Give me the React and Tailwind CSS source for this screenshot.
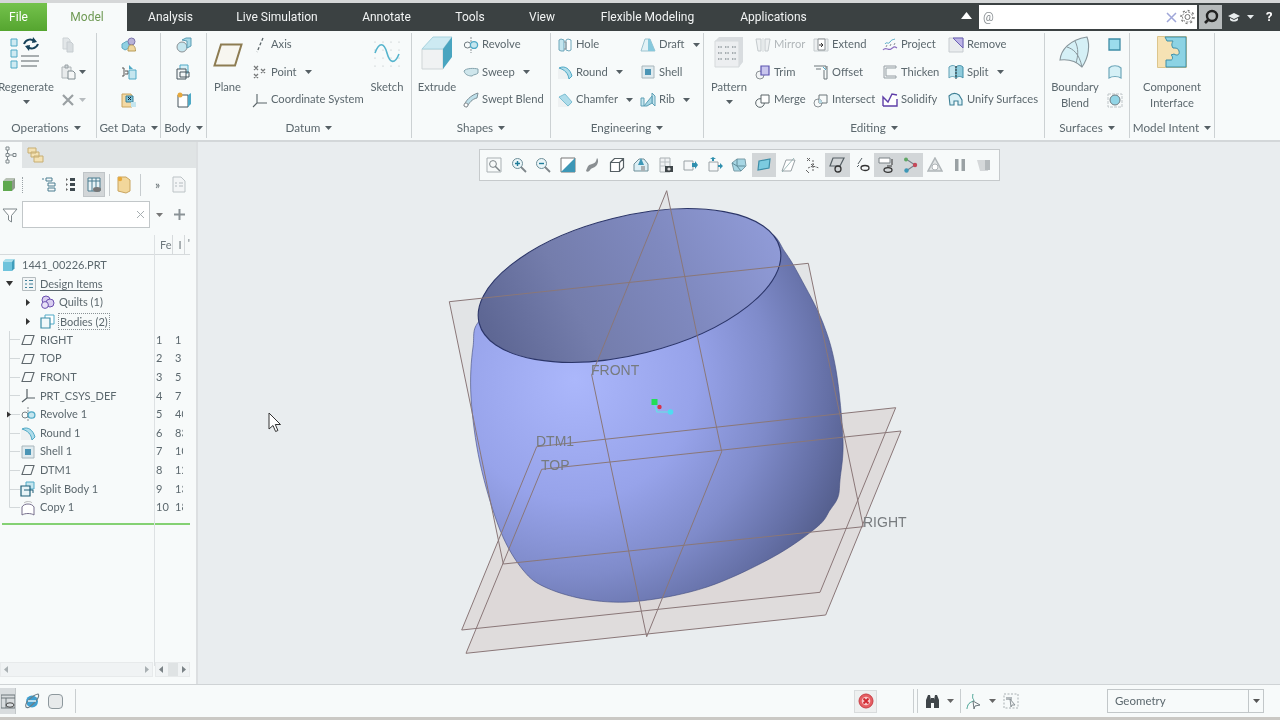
import React from "react";

const T = "#4fa9c6", L = "#c5e6ef", G = "#8b9195", D = "#47555c", Y = "#f3d9a4";
const S = ({ w = 16, h = 16, children }) => (
  <svg width={w} height={h} viewBox={`0 0 ${w} ${h}`} fill="none" className="block shrink-0">{children}</svg>
);
const Caret = ({ c = "#555f64", cls = "" }) => (
  <svg width="7" height="4" viewBox="0 0 7 4" className={`block shrink-0 ${cls}`}><path d="M0 0h7L3.5 4z" fill={c} /></svg>
);

const I = {
  copy: <S><path d="M3 1h5l2 2v9H3z" fill="#e2e6e8" stroke="#ccd2d5" /><path d="M7 5h4l2 2v8H7z" fill="#d8dde0" stroke="#c6ccd0" /></S>,
  paste: <S><path d="M2 3h9v11H2z" fill="#e8ebec" stroke="#aeb5b8" /><path d="M5 1h3v3H5z" fill="#cfd5d8" stroke="#9aa2a6" /><path d="M8 7h5l2 2v6H8z" fill="#f5f7f7" stroke="#7f8a8f" /></S>,
  del: <S><path d="M3 3l10 10M13 3L3 13" stroke="#9aa0a3" strokeWidth="2.2" /></S>,
  gd1: <S><path d="M1 7l5-3 2 1v6l-4 2-3-2z" fill="#8fd0e2" stroke="#5fa9c0" /><circle cx="10.5" cy="4.5" r="3.5" fill="#b8b3d8" stroke="#7d76ad" /><path d="M7 14c0-4 1-6 3.5-6s4 2 4 6z" fill="#efd79f" stroke="#b79a56" /></S>,
  gd2: <S><path d="M1 4h2v8H1M4 7h3v3H4" stroke="#555" /><path d="M8 1l4 4H8z" fill={T} /><path d="M8 6h7v9H8z" fill={L} stroke={T} /></S>,
  gd3: <S><path d="M1 2h9l1 2v11H1z" fill={Y} stroke="#c9a45f" /><path d="M5 4h7v6H5z" fill="#7ec5da" stroke="#3d7f95" /><path d="M7 5l3 3M10 5L7 8" stroke="#123" /><path d="M10 10h5v5h-5z" fill={L} /></S>,
  b1: <S><circle cx="6" cy="10" r="5" fill={L} stroke={G} /><path d="M6 3l4-2h5v8l-4 2V4z" fill="#a7d8e6" stroke="#5a9db4" /></S>,
  b2: <S><path d="M4 1h8v8H4z" fill="#d7eff6" stroke={T} /><path d="M1 5h9v10H1z" fill="#f2f5f6" stroke={D} /><path d="M4 8h9v5H4z" fill="none" stroke={D} /></S>,
  b3: <S><path d="M2 3h10v12H2z" fill="#fff" stroke={D} /><path d="M12 3l3-2v11l-3 3z" fill={T} /><circle cx="4" cy="3" r="2.5" fill="#e7a93c" /></S>,
  axis: <S><path d="M11 1L5 15" stroke="#5a6468" strokeWidth="1.3" strokeDasharray="3 2" /></S>,
  point: <S><path d="M2 2l4 4M6 2L2 6M9 5l4 4M13 5L9 9M2 10l4 4M6 10l-4 4" stroke="#77797a" strokeWidth="1.3" /></S>,
  csys: <S><path d="M5 2v9L1 15M5 11h10" stroke="#5a6468" strokeWidth="1.1" /></S>,
  revolve: <S><path d="M8 0v16" stroke={G} strokeDasharray="2 1" /><ellipse cx="4.5" cy="8" rx="3.2" ry="3" stroke="#6f7a80" /><ellipse cx="11" cy="8" rx="3.6" ry="3.4" fill={L} stroke={T} strokeWidth="1.3" /></S>,
  sweep: <S><path d="M1 7c2-3 10-3 14-2v4c-2 2-4 1-6 3-3 0-7-1-8-5z" fill="#cfe6ec" stroke="#84a3ad" /></S>,
  swept: <S><path d="M1 14C2 9 8 3 15 1l-1 5C9 7 6 11 4 15z" fill="#bfe0ea" stroke="#7d8f97" /><circle cx="3" cy="13" r="2" fill="#fff" stroke={G} /></S>,
  hole: <S><path d="M2 3l2-1 3 1v11H4L2 13z" fill={L} stroke="#6fa7ba" /><path d="M9 3l2-1 3 1v10l-2 1-3-1z" fill="#fff" stroke="#6fa7ba" /><path d="M7 5h2v7H7" stroke={G} /></S>,
  round: <S><path d="M1 4h6c4 0 8 3 8 8l-4 3H1z" fill="#eef1f2" /><path d="M2 4c6-3 11 1 13 8l-3 3C11 9 8 6 2 4z" fill="#aedcea" stroke={T} /></S>,
  chamfer: <S><path d="M1 5h7l7 7-4 3H1z" fill="#eef1f2" /><path d="M2 5l6-3 7 8-4 4z" fill="#aedcea" stroke="#7dbfd3" /></S>,
  draft: <S><path d="M5 2h5l5 12H1z" fill="#e3f2f6" stroke="#9cc3cf" /><path d="M8 2h2l5 12H8z" fill="#86c8dc" /></S>,
  shell: <S><path d="M2 2h12v12H2z" fill="#dfeaee" stroke="#a8b6bc" /><path d="M5 5h6v6H5z" fill="#4b95b5" /></S>,
  rib: <S><path d="M1 6h3v8H1zM12 1v10l3 3V4z" fill={L} stroke="#5e9fb5" /><path d="M4 14L12 4v7l-5 3z" fill="#a5d6e4" stroke="#5e9fb5" /></S>,
  mirror: <S><path d="M1 2h5v12H3zM15 2h-5v12h3z" fill="#eef1f2" stroke="#c4cacd" /><path d="M8 1v14" stroke="#d4d9db" /></S>,
  trim: <S><circle cx="5" cy="11" r="4" fill="#f2f4f5" stroke={G} /><path d="M6 2h8v9H6z" fill="#c9c6ee" stroke="#5c54b0" strokeWidth="1.2" /></S>,
  merge: <S><circle cx="5" cy="11" r="4.3" stroke="#5a6468" /><path d="M6 3h8v8H6z" fill="#fff" stroke="#5a6468" /></S>,
  extend: <S><path d="M1 2h14v12H1z" fill="#eceff0" stroke="#c6cccf" /><path d="M5 2h7v11H5z" fill="#fff" stroke={G} /><path d="M6 8h4M8 6l2 2-2 2" stroke="#333" /></S>,
  offset: <S><path d="M1 2h12v3M3 5h5M11 6v9h3V2" stroke="#6c767b" /><path d="M10 3l3 3" stroke={T} /></S>,
  intersect: <S><circle cx="5" cy="11" r="4" stroke={G} /><path d="M6 3h8v8H6z" stroke="#6c767b" /><path d="M6 7a4 4 0 013 4H6z" fill="#b7dbe6" /></S>,
  project: <S><path d="M1 13c3-4 5 1 8-1s3-3 6-1" stroke="#8a6dc0" strokeWidth="1.2" /><path d="M3 7c2-3 3 1 5-2s3-2 5-3" stroke={T} /><path d="M4 10l1-2M8 9l1-2M12 8l1-2" stroke={G} /></S>,
  thicken: <S><path d="M2 2h12v2H4v8h10v2H2z" fill="#eef1f2" stroke="#98a1a6" /></S>,
  solidify: <S><path d="M1 14V5l5 5 4-8 5 1v11z" fill="#fff" /><path d="M1 14V5l5 5 4-8 5 1M1 14h14V7" stroke="#5f3fa8" strokeWidth="1.4" /></S>,
  remove: <S><path d="M1 1h14v14H1z" fill="#e9ecee" stroke="#c7ccd0" /><path d="M5 1h10v10z" fill="#bdb5e6" stroke="#6a60b5" /></S>,
  split: <S><path d="M1 3c3-2 5-2 7 0v11c-2-2-5-2-7 0z" fill={L} stroke="#5e9fb5" /><path d="M8 3c2-2 5-2 7 0v11c-2-2-5-2-7 0z" fill="#8fcbdc" stroke="#3f8da6" /><path d="M8 2v13" stroke="#333" strokeDasharray="2 1" /></S>,
  unify: <S><path d="M1 4c3-3 7-3 10-1l3 5v5h-4V9H6v4H2z" fill="#d9f0f6" stroke="#3d7f95" strokeWidth="1.1" /></S>,
  s1: <S><path d="M2 2h11v11H2z" fill="#9bdcec" stroke="#3f8da6" strokeWidth="1.3" /></S>,
  s2: <S><path d="M2 14V4c3-3 9-3 12 0v10c-3-2-9-2-12 0z" fill="#d5f0f6" stroke="#6fa7ba" strokeWidth="1.2" /></S>,
  s3: <S><path d="M1 2h14v13H1z" stroke="#bfc5c8" strokeDasharray="3 1" /><circle cx="8" cy="8" r="5" fill="#92d5e6" stroke="#6f7a80" /></S>,
};

const Regen = () => (
  <svg width="32" height="36" viewBox="0 0 32 36" fill="none" className="block">
    {[2, 13, 24].map((y) => <path key={y} d={`M1 ${y + 1}h6v7H1z`} fill="#cfeaf2" stroke={T} />)}
    <path d="M14 8c2-5 8-6 11-2M28 8c-2 5-8 6-11 2" stroke="#17425a" strokeWidth="2" />
    <path d="M23 1l4 5-5 1zM19 15l-4-5 5-1z" fill="#17425a" />
    <path d="M11 20h18M11 25h18M11 30h16" stroke="#8f9598" strokeWidth="1.6" />
  </svg>
);
const PlaneBig = () => (
  <svg width="30" height="24" viewBox="0 0 30 24" fill="none" className="block"><path d="M8 1.5h20.5L22 22.5H1.5z" fill="#f7f6f0" stroke="#8d7c52" strokeWidth="2" /></svg>
);
const SketchBig = () => (
  <svg width="28" height="30" viewBox="0 0 28 30" fill="none" className="block">
    {[2, 10, 18, 26].flatMap((x) => [3, 11, 19, 27].map((y) => <circle key={x + "-" + y} cx={x} cy={y} r=".6" fill="#b2b8bb" />))}
    <path d="M2 14C6 3 11 3 14 14s8 11 12 1" stroke="#55b4cd" strokeWidth="1.6" />
  </svg>
);
const ExtrudeBig = () => (
  <svg width="32" height="34" viewBox="0 0 32 34" fill="none" className="block">
    <path d="M1 13h21v20H1z" fill="#f0f2f3" stroke="#cfd5d7" />
    <path d="M1 13L12 1h19L22 13z" fill="#cdeaf2" stroke="#a9d3de" />
    <path d="M22 13l9-12v20l-9 12z" fill="#49a5c0" />
  </svg>
);
const PatternBig = () => (
  <svg width="30" height="32" viewBox="0 0 30 32" fill="none" className="block">
    <path d="M1 5h24v26H1z" fill="#eceef0" stroke="#d5d9db" />
    <path d="M1 5l4-4h24l-4 4zM25 5l4-4v25l-4 5z" fill="#d8dcdf" />
    {[6, 13, 20].flatMap((x) => [11, 17, 23].map((y) => <path key={x + "," + y} d={`M${x - 2} ${y}h4`} stroke="#8e979b" strokeWidth="1.6" strokeDasharray="1 .6" />))}
  </svg>
);
const BlendBig = () => (
  <svg width="32" height="32" viewBox="0 0 32 32" fill="none" className="block">
    <path d="M1 24C2 14 10 4 28 1c3 8 2 20-5 30-6-6-14-8-22-7z" fill="#d5f0f6" stroke="#87959b" strokeWidth="1.1" />
    <path d="M8 11c6 2 12 6 15 20M16 5c4 8 3 15 1 22" stroke="#87959b" />
  </svg>
);
const Component = () => (
  <svg width="30" height="32" viewBox="0 0 30 32" fill="none" className="block">
    <path d="M.5.5h29v31H.5z" fill="#f6e2b4" stroke="#dcc58c" />
    <path d="M8 1h21v30H9v-7h5c2 0 2-4 0-5l3-1c3 2 6 1 5-3-1-3-3-3-6-3-2-3-1-5 0-7H10z" fill="#8cd3e4" stroke="#3d8ea8" />
  </svg>
);

const Small = ({ icon, label, caret, off, cls = "" }) => (
  <div className={`flex h-[27.5px] items-center gap-[3px] whitespace-nowrap ${cls}`}>
    {I[icon]}
    <span className={off ? "text-[#b1b7ba]" : ""}>{label}</span>
    {caret && <Caret cls="ml-[5px]" />}
  </div>
);
const Large = ({ icon, lines, caret, w }) => (
  <div className={`flex flex-col items-center pt-[5px] shrink-0 ${w}`}>
    <div className="flex h-[43px] items-start justify-center">{icon}</div>
    {lines.map((l) => <span key={l} className="h-4 leading-4 whitespace-nowrap">{l}</span>)}
    {caret && <Caret cls="mt-[5px]" />}
  </div>
);
const Group = ({ label, w, labelCls = "", children }) => (
  <div className={`flex flex-col shrink-0 ${w}`}>
    <div className="flex h-[83px] shrink-0">{children}</div>
    <div className={`flex h-[25px] shrink-0 pt-[2px] items-center justify-center gap-[5px] text-[11.7px] ${labelCls}`}>
      <span>{label}</span><Caret />
    </div>
  </div>
);
const Sep = () => <div className="w-px my-[2px] bg-[#ccd1d3] shrink-0" />;

const Ribbon = () => (
  <div className="flex h-[111px] shrink-0 bg-[#f7fafa] text-[11.2px] font-['Lato',sans-serif] text-[#5c686e] overflow-hidden border-b-2 border-[#d3d7d9]">
    <Group label="Operations" w="w-[96px]" labelCls="pr-[4px]">
      <Large w="w-[52px]" icon={<Regen />} lines={["Regenerate"]} caret />
      <div className="flex flex-col pl-[8px]">
        <div className="flex h-[27.5px] items-center">{I.copy}</div>
        <div className="flex h-[27.5px] items-center gap-[3px]">{I.paste}<Caret /></div>
        <div className="flex h-[27.5px] items-center gap-[3px]">{I.del}<Caret c="#b7bcbf" /></div>
      </div>
    </Group>
    <Sep />
    <Group label="Get Data" w="w-[63px]">
      <div className="flex flex-col w-full items-center">
        {["gd1", "gd2", "gd3"].map((k) => <div key={k} className="flex h-[27.5px] items-center">{I[k]}</div>)}
      </div>
    </Group>
    <Sep />
    <Group label="Body" w="w-[45px]">
      <div className="flex flex-col w-full items-center">
        {["b1", "b2", "b3"].map((k) => <div key={k} className="flex h-[27.5px] items-center">{I[k]}</div>)}
      </div>
    </Group>
    <Sep />
    <Group label="Datum" w="w-[204px]">
      <Large w="w-[41px]" icon={<div className="pt-[7px]"><PlaneBig /></div>} lines={["Plane"]} />
      <div className="flex flex-col pl-[4px] w-[118px]">
        <Small icon="axis" label="Axis" />
        <Small icon="point" label="Point" caret />
        <Small icon="csys" label="Coordinate System" />
      </div>
      <Large w="w-[42px]" icon={<div className="pt-[3px]"><SketchBig /></div>} lines={["Sketch"]} />
    </Group>
    <Sep />
    <Group label="Shapes" w="w-[138px]">
      <Large w="w-[50px]" icon={<ExtrudeBig />} lines={["Extrude"]} />
      <div className="flex flex-col pl-[1px]">
        <Small icon="revolve" label="Revolve" />
        <Small icon="sweep" label="Sweep" caret />
        <Small icon="swept" label="Swept Blend" />
      </div>
    </Group>
    <Sep />
    <Group label="Engineering" w="w-[152px]">
      <div className="flex flex-col pl-[6px] w-[89px]">
        <Small icon="hole" label="Hole" />
        <Small icon="round" label="Round" caret />
        <Small icon="chamfer" label="Chamfer" caret />
      </div>
      <div className="flex flex-col">
        <Small icon="draft" label="Draft" caret />
        <Small icon="shell" label="Shell" />
        <Small icon="rib" label="Rib" caret />
      </div>
    </Group>
    <Sep />
    <Group label="Editing" w="w-[340px]">
      <Large w="w-[50px]" icon={<PatternBig />} lines={["Pattern"]} caret />
      <div className="flex flex-col pl-[1px] w-[59px]">
        <Small icon="mirror" label="Mirror" off />
        <Small icon="trim" label="Trim" />
        <Small icon="merge" label="Merge" />
      </div>
      <div className="flex flex-col w-[69px]">
        <Small icon="extend" label="Extend" />
        <Small icon="offset" label="Offset" />
        <Small icon="intersect" label="Intersect" />
      </div>
      <div className="flex flex-col w-[66px]">
        <Small icon="project" label="Project" />
        <Small icon="thicken" label="Thicken" />
        <Small icon="solidify" label="Solidify" />
      </div>
      <div className="flex flex-col">
        <Small icon="remove" label="Remove" />
        <Small icon="split" label="Split" caret />
        <Small icon="unify" label="Unify Surfaces" />
      </div>
    </Group>
    <Sep />
    <Group label="Surfaces" w="w-[84px]">
      <Large w="w-[60px]" icon={<BlendBig />} lines={["Boundary", "Blend"]} />
      <div className="flex flex-col items-center w-[20px]">
        {["s1", "s2", "s3"].map((k) => <div key={k} className="flex h-[27.5px] items-center">{I[k]}</div>)}
      </div>
    </Group>
    <Sep />
    <Group label="Model Intent" w="w-[84px]">
      <Large w="w-full" icon={<Component />} lines={["Component", "Interface"]} />
    </Group>
    <Sep />
  </div>
);

const tabs = [["Analysis", "w-[87px]"], ["Live Simulation", "w-[126px]"], ["Annotate", "w-[93px]"], ["Tools", "w-[74px]"], ["View", "w-[70px]"], ["Flexible Modeling", "w-[141px]"], ["Applications", "w-[111px]"]];

const TabBar = () => (
  <div className="flex h-[28px] shrink-0 items-stretch bg-[#3b4142] text-xs text-[#f2f4f4]">
    <div className="flex w-[47px] items-center justify-center pr-[10px] bg-gradient-to-b from-[#74c24c] to-[#55a52f] text-white">File</div>
    <div className="flex w-[80px] items-center justify-center bg-[#f7fafa] text-[#6f9a55]">Model</div>
    {tabs.map(([t, w]) => <div key={t} className={`flex items-center justify-center ${w}`}>{t}</div>)}
    <div className="flex-1 flex items-center justify-end pr-[7px] pb-[3px]">
      <svg width="11" height="7" viewBox="0 0 11 7"><path d="M0 7L5.5 0 11 7z" fill="#fff" /></svg>
    </div>
    <div className="flex w-[218px] h-[24px] self-center mr-[2px] items-center bg-white pl-[4px] pr-[2px] text-[#8a9094]">
      <span className="flex-1">@</span>
      <svg width="11" height="11" viewBox="0 0 11 11" className="mr-[3px]"><path d="M1 1l9 9M10 1l-9 9" stroke="#9fa6d8" strokeWidth="1.5" /></svg>
      <svg width="15" height="16" viewBox="0 0 15 16" fill="none"><circle cx="7.5" cy="8" r="2.5" stroke="#777" /><circle cx="7.5" cy="8" r="5" stroke="#777" strokeWidth="1" strokeDasharray="2 1.4" /><circle cx="7.5" cy="8" r="6.5" stroke="#777" strokeWidth="1.4" strokeDasharray="2 3" /></svg>
    </div>
    <div className="flex w-[23px] h-[24px] self-center items-center justify-center bg-[#b6babb]">
      <svg width="16" height="16" viewBox="0 0 16 16" fill="none"><circle cx="9" cy="7" r="5" stroke="#222" strokeWidth="2.4" /><path d="M5 11l-3 3" stroke="#222" strokeWidth="2.6" /></svg>
    </div>
    <div className="flex w-[58px] items-center pl-[6px]">
      <svg width="12" height="9" viewBox="0 0 12 9"><path d="M0 3l6-3 6 3-6 3z" fill="#e8eced" /><path d="M2 5v2c2 2 6 2 8 0V5L6 7z" fill="#e8eced" /></svg>
      <Caret c="#e8eced" cls="ml-[7px]" />
      <span className="ml-[12px] font-bold text-[13px] text-white">?</span>
    </div>
  </div>
);

const Tb = ({ children, on }) => (
  <div className={`flex h-[24px] w-[24.5px] items-center justify-center shrink-0 ${on ? "bg-[#d2d6d8]" : ""}`}>{children}</div>
);
const V = (c) => <S>{c}</S>;
const viewIcons = [
  V(<><path d="M1 1h14v14H1z" stroke="#a9b0b3" /><circle cx="7" cy="7" r="3.4" stroke="#7e868a" /><path d="M9 9l5 5" stroke="#7e868a" strokeWidth="1.5" /></>),
  V(<><circle cx="6.5" cy="6.5" r="5" fill="#eaf5f8" stroke="#6f8f99" /><path d="M4 6.5h5M6.5 4v5" stroke="#1e7c99" strokeWidth="1.4" /><path d="M10 10l5 5" stroke="#7e868a" strokeWidth="1.8" /></>),
  V(<><circle cx="6.5" cy="6.5" r="5" fill="#eaf5f8" stroke="#6f8f99" /><path d="M4 6.5h5" stroke="#1e7c99" strokeWidth="1.4" /><path d="M10 10l5 5" stroke="#7e868a" strokeWidth="1.8" /></>),
  V(<><path d="M1 1h14v14H1z" fill="#fff" stroke="#777" /><path d="M15 1v14H1z" fill="#3d97b6" /></>),
  V(<path d="M2 14c2-5 2-6 6-7s4-3 5-6c2 2 1 6-1 8s-5 2-6 4-3 2-4 1z" fill="#8a8f92" />),
  V(<path d="M1.5 5.5l4-4h9v9l-4 4h-9zM1.5 5.5h9v9M10.5 5.5l4-4" fill="#fff" stroke="#555f64" strokeWidth="1.2" />),
  V(<><path d="M1 7l5-5h5l4 5v7H1z" fill="#dceef4" stroke="#6f8f99" /><path d="M8 1l3 7H5z" fill="#3d97b6" /><path d="M8 9h4v5H8z" fill="#aab1b4" /></>),
  V(<><path d="M2 1h10v14H2z" fill="#f1f3f4" stroke="#a9b0b3" /><path d="M2 5h10M2 9h6M7 1v8" stroke="#b9bfc2" /><path d="M7 9h8v6H7z" fill="#3f4649" /><circle cx="11" cy="12" r="1.6" fill="#ddd" /></>),
  V(<><path d="M2 4h9v9H2z" fill="#f5f7f8" stroke="#9aa2a6" /><path d="M10 6h3V4l3 4-3 4v-2h-3z" fill="#2f8fae" /></>),
  V(<><path d="M2 5h9v9H2z" fill="#f5f7f8" stroke="#9aa2a6" /><path d="M5 4V2H3l3-2 3 2H7v2z" fill="#2f8fae" /><path d="M11 8h2V6l3 3-3 3v-2h-2z" fill="#2f8fae" /></>),
  V(<><path d="M1 6l5-4h8l1 7-5 5H3z" fill="#a6d6e4" stroke="#7b9ca7" /><path d="M6 2v7l-5-3M6 9l8 0M6 9l4 5" stroke="#5f8c9a" /></>),
  V(<path d="M3 4l11-2-1 9-11 2z" fill="#7ccbe0" stroke="#3d8ea8" strokeWidth="1.2" />),
  V(<><path d="M2 14h9l4-11H6z" fill="#fff" stroke="#9aa2a6" /><path d="M14 1L2 15" stroke="#8aa" strokeWidth=".8" /></>),
  V(<><path d="M2 1l3 3M5 1L2 4M6 7l3 3M9 7l-3 3M1 13l3 3" stroke="#666" /><path d="M8 3v12M3 11l5-2 6 2" stroke="#666" strokeDasharray="2 1" /></>),
  V(<><path d="M4 1h11l-4 8H1z" stroke="#555f64" strokeWidth="1.2" /><circle cx="9" cy="12" r="3" fill="#d0d4d6" stroke="#333" strokeWidth="1.3" /></>),
  V(<><path d="M8 1L4 7M5 8L3 10" stroke="#555f64" /><ellipse cx="11" cy="11" rx="4" ry="2.5" stroke="#333" strokeWidth="1.3" /></>),
  V(<><path d="M1 1h11v5H1z" fill="#fff" stroke="#7a8286" /><path d="M14 2v6M9 9h5" stroke="#333" /><ellipse cx="10" cy="13" rx="4" ry="2.3" stroke="#333" strokeWidth="1.3" /></>),
  V(<><path d="M3 2l9 6-9 6" stroke="#77808a" strokeWidth="1.1" /><circle cx="3" cy="2.5" r="2" fill="#5fa764" /><circle cx="12" cy="8" r="2.2" fill="#c4495a" /><circle cx="3.5" cy="13.5" r="2.2" fill="#3d97b6" /></>),
  V(<><path d="M8 1l7 13H1z" fill="#e2e5e6" stroke="#afb5b8" strokeWidth="1.5" /><circle cx="8" cy="10" r="3" fill="#fff" stroke="#afb5b8" /></>),
  V(<path d="M3 2h3.5v12H3zM9.5 2H13v12H9.5z" fill="#9aa1a4" />),
  V(<><path d="M1 3h11v11H4z" fill="#d5d8da" /><path d="M9 3h5v10H9z" fill="#b5babd" /></>),
];
const actives = new Set([11, 14, 16, 17]);

const ViewBar = () => (
  <div className="relative z-10 ml-[281px] mt-[7px] flex h-[32px] w-[521px] items-center pl-[2px] bg-[#f7fafa] border border-[#c6cacc]">
    {viewIcons.map((ic, i) => <Tb key={i} on={actives.has(i)}>{ic}</Tb>)}
  </div>
);

const smooth = (p) => {
  const n = p.length;
  let d = `M${p[0][0]} ${p[0][1]}`;
  for (let i = 0; i < n; i++) {
    const a = p[(i - 1 + n) % n], b = p[i], c = p[(i + 1) % n], e = p[(i + 2) % n];
    d += `C${b[0] + (c[0] - a[0]) / 6} ${b[1] + (c[1] - a[1]) / 6} ${c[0] - (e[0] - b[0]) / 6} ${c[1] - (e[1] - b[1]) / 6} ${c[0]} ${c[1]}`;
  }
  return d + "Z";
};
const bodyPts = [[768, 232], [785, 252], [800, 277], [823, 323], [836, 370], [843, 440], [840, 480], [838, 497], [830, 510], [817, 527], [773, 557], [707, 587], [640, 601], [590, 600], [547, 588], [523, 570], [500, 530], [480, 463], [471, 397], [473, 347], [482, 318], [540, 280], [640, 240], [720, 225]];

const Model = () => {
  const line = "#8a7778";
  return (
    <svg className="absolute left-0 top-0" width="1082" height="542" viewBox="198 142 1082 542" fill="none">
      <defs>
        <radialGradient id="bd" gradientUnits="userSpaceOnUse" cx="575" cy="380" r="300">
          <stop offset="0" stopColor="#abb7fb" />
          <stop offset=".4" stopColor="#97a3ea" />
          <stop offset=".65" stopColor="#7f8bca" />
          <stop offset=".85" stopColor="#646fa5" />
          <stop offset="1" stopColor="#4f5985" />
        </radialGradient>
        <linearGradient id="rm" gradientUnits="userSpaceOnUse" x1="490" y1="330" x2="775" y2="260">
          <stop offset="0" stopColor="#5e6794" />
          <stop offset=".3" stopColor="#747dac" />
          <stop offset=".65" stopColor="#7f89bf" />
          <stop offset="1" stopColor="#8f9ad6" />
        </linearGradient>
      </defs>
      <path d="M449.3 301.7L808.3 263.3L863.3 526.7L503.3 564Z" fill="#e2e4e6" />
      <path d="M666.7 190.7L721.7 451.7L646.7 636.7L591.7 375Z" fill="#e3e5e7" />
      <path d="M536.7 446.7L895.7 407.7L820 592.3L461.7 630Z" fill="#dfdcdc" />
      <path d="M541.7 469.3L901 431L825.7 615L466 653.3Z" fill="#dcd7d7" fillOpacity=".8" />
      <path d={smooth(bodyPts)} fill="url(#bd)" stroke="#3f4a7c" strokeWidth=".6" />
      <ellipse cx="629.5" cy="285.5" rx="155" ry="69" transform="rotate(-14 629.5 285.5)" fill="url(#rm)" stroke="#2b3568" strokeWidth="1.1" />
      <g stroke={line} strokeWidth="1">
        <path d="M449.3 301.7L808.3 263.3L863.3 526.7L503.3 564Z" />
        <path d="M666.7 190.7L721.7 451.7L646.7 636.7L591.7 375Z" />
        <path d="M536.7 446.7L895.7 407.7L820 592.3L461.7 630Z" />
        <path d="M541.7 469.3L901 431L825.7 615L466 653.3Z" />
      </g>
      <g fill="#777b7e" fontFamily="'Liberation Sans', sans-serif" fontSize="14">
        <text x="591" y="375">FRONT</text>
        <text x="536" y="446">DTM1</text>
        <text x="541" y="470">TOP</text>
        <text x="863" y="527">RIGHT</text>
      </g>
      <path d="M654 403l3 9h13" stroke="#62e3e8" strokeWidth="1.2" />
      <rect x="651.5" y="399" width="6" height="6" fill="#22dd55" />
      <circle cx="659.5" cy="407" r="2.2" fill="#d8324a" />
      <circle cx="670.5" cy="412" r="2.8" fill="#4fdcf0" />
      <path d="M269 413v16l4-3.5 2.6 6 2.3-1-2.6-6h5.2z" fill="#fff" stroke="#333" strokeWidth="1" />
    </svg>
  );
};

const Gut = ({ arrow, end }) => (
  <svg width="40" height="19" viewBox="0 0 40 19" fill="none" className="block shrink-0">
    <path d={end ? "M9.5 0V9.5H20" : "M9.5 0V19M9.5 9.5H20"} stroke="#d3d8da" />
    {arrow === "r" && <path d="M7 6.5l4 3-4 3z" fill="#333" />}
  </svg>
);
const TP = <S w={14} h={14}><path d="M4 2.5h9L10 11.5H1z" stroke="#5f686d" strokeWidth="1.1" /></S>;
const treeIc = {
  csys: <S w={15} h={15}><path d="M6 1v9L1 14M6 10h8" stroke="#555f64" strokeWidth="1.2" /></S>,
  rev: <S w={15} h={15}><path d="M7 0v15" stroke={G} strokeDasharray="2 1" /><ellipse cx="4" cy="8" rx="3" ry="3" stroke="#7a8286" /><ellipse cx="10.5" cy="8" rx="3.4" ry="3.2" fill={L} stroke={T} strokeWidth="1.3" /></S>,
  round: I.round,
  shell: I.shell,
  split: <S><path d="M6 1h8v7H6z" fill="#c5e6ef" stroke={T} /><path d="M1 5h9v10H1z" fill="#e8f4f7" stroke="#1f5f78" strokeWidth="1.2" /><path d="M4 9h9v3" stroke="#1f5f78" /></S>,
  copy: <S><path d="M2 15V7c2-4 10-4 12 0v8c-3-2-9-2-12 0z" fill="#fff" stroke="#766f8c" /><path d="M4 3c2-2 7-2 8 0" stroke="#bbb" /></S>,
};
const rows = [
  ["RIGHT", TP, "1", "1"], ["TOP", TP, "2", "3"], ["FRONT", TP, "3", "5"], ["PRT_CSYS_DEF", treeIc.csys, "4", "7"],
  ["Revolve 1", treeIc.rev, "5", "40", "r"], ["Round 1", treeIc.round, "6", "83"], ["Shell 1", treeIc.shell, "7", "10"],
  ["DTM1", TP, "8", "12"], ["Split Body 1", treeIc.split, "9", "13"], ["Copy 1", treeIc.copy, "10", "18", null, true],
];

const Row = ({ children }) => <div className="flex h-[18.65px] items-center overflow-hidden">{children}</div>;

function Arrow({ r, dark }) {
  return <svg width="4" height="7" viewBox="0 0 4 7"><path d={r ? "M0 0l4 3.500L0 7z" : "M4 0L0 3.500 4 7z"} fill={dark ? "#7a8286" : "#a9b0b3"} /></svg>;
}

const Panel = () => (
  <div className="flex w-[198px] shrink-0 flex-col bg-[#f7fafa] border-r-2 border-[#dcdfe1] text-[11px] font-['Lato',sans-serif] text-[#5c686e] overflow-hidden">
    <div className="flex h-[26px] shrink-0 bg-[#e0e4e5]">
      <div className="flex w-[22px] items-center justify-center bg-[#f7fafa]">
        <svg width="12" height="18" viewBox="0 0 12 18" fill="none" stroke="#7f888c"><path d="M1 1h3v3H1zM1 7.5h3v3H1zM1 14h3v3H1zM8 7.5h3v3H8zM2.500 4v3.500M2.500 10.500V14M4 9h4" /></svg>
      </div>
      <div className="flex w-[26px] items-center justify-center">
        <svg width="17" height="16" viewBox="0 0 17 16" fill="#f4e2b4" stroke="#c7ae72"><path d="M1 1h8v5H1zM4 5h8v5H4zM7 9h9v6H7z" /></svg>
      </div>
    </div>
    <div className="flex h-[33px] shrink-0 items-center">
      <div className="ml-[2px] w-[14px]">
        <svg width="14" height="15" viewBox="0 0 14 15"><path d="M1 4h9v10H1z" fill="#5fa84f" /><path d="M1 4l3-3h9l-3 3z" fill="#b7c1b4" /><path d="M10 4l3-3v10l-3 3z" fill="#8f9b8c" /></svg>
      </div>
      <div className="ml-[6px] h-[16px] border-l border-dotted border-[#9aa2a6]" />
      <div className="ml-[18px] w-[16px]">
        <svg width="16" height="15" viewBox="0 0 16 15" fill="none"><path d="M3 2H1M5 1h6v3H5zM7 6h7v3H7zM7 11h7v3H7z" stroke="#4b7d90" /></svg>
      </div>
      <div className="ml-[8px] w-[12px]">
        <svg width="12" height="15" viewBox="0 0 12 15"><path d="M1 1l2 1.500L1 4zM1 6l2 1.500L1 9zM1 11l2 1.500L1 14z" fill="#666" /><path d="M5 1h5v3H5zM5 6h5v3H5zM5 11h5v3H5z" fill="#3f4a50" /></svg>
      </div>
      <div className="ml-[6px] flex h-[25px] w-[22px] items-center justify-center bg-[#d2d6d8] border border-[#c0c5c8]">
        <svg width="15" height="16" viewBox="0 0 15 16" fill="none"><path d="M1 1h12v13H1zM1 4h12M5 1v13M9 1v13" stroke="#4b7d90" fill="#e8f2f5" /><ellipse cx="10" cy="12.500" rx="4" ry="2.400" fill="#777" /></svg>
      </div>
      <div className="ml-[4px] h-[22px] border-l border-[#c7cccf]" />
      <div className="ml-[7px] w-[14px]">
        <svg width="14" height="18" viewBox="0 0 14 18"><path d="M1 1h8l4 3v11l-4 2-8-2z" fill="#f2d79b" stroke="#c9a45f" /><circle cx="3" cy="3" r="2.200" fill="#e7a93c" /></svg>
      </div>
      <div className="ml-[9px] h-[22px] border-l border-[#c7cccf]" />
      <span className="ml-[14px] text-[12px] leading-none text-[#5a6468]">»</span>
      <div className="ml-[12px]">
        <svg width="14" height="17" viewBox="0 0 14 17" fill="none"><path d="M1 1h8l4 4v11H1z" fill="#f3f5f6" stroke="#bcc3c6" /><path d="M3 7h2M7 7h4M3 10h2M7 10h4" stroke="#b4bbbf" /></svg>
      </div>
    </div>
    <div className="flex h-[27px] shrink-0 items-center">
      <svg width="16" height="16" viewBox="0 0 16 16" fill="none" className="ml-[2px]"><path d="M1 2h14L9.500 8.500V15l-3-2V8.500z" fill="#fff" stroke="#7f888c" /></svg>
      <div className="ml-[4px] flex h-[27px] w-[128px] items-center justify-end border border-[#c2c7c9] bg-white pr-[4px]">
        <svg width="9" height="9" viewBox="0 0 9 9"><path d="M1 1l7 7M8 1L1 8" stroke="#a7aeb1" /></svg>
      </div>
      <Caret c="#777" cls="ml-[6px]" />
      <svg width="11" height="11" viewBox="0 0 11 11" className="ml-[11px]"><path d="M4.500 0h2v4.500H11v2H6.500V11h-2V6.500H0v-2h4.500z" fill="#8a9296" /></svg>
    </div>
    <div className="mt-[7px] relative flex-1 flex flex-col">
      <div className="absolute left-[154px] top-0 bottom-[18px] w-px bg-[#dde1e3]" />
      <div className="flex h-[20px] shrink-0 border-b border-[#d6dadc] text-[#6f797e] mr-[6px]">
        <div className="ml-[154px] w-[20px] pl-[5px] leading-[20px] border-l border-[#d6dadc]">Fe</div>
        <div className="w-[12px] pl-[5px] leading-[20px] border-l border-[#d6dadc] overflow-hidden">I</div>
        <div className="pl-[3px] leading-[16px] border-l border-[#d6dadc]">'</div>
      </div>
      <div className="pt-px">
        <Row>
          <div className="ml-[2px]"><S w={14} h={14}><path d="M1 3.500h9V13H1z" fill="#6ec3dc" /><path d="M1 3.500L3.500 1h9L10 3.500z" fill="#a8deeb" /><path d="M10 3.500L12.500 1v9.500L10 13z" fill="#3f9dbb" /></S></div>
          <span className="ml-[6px]">1441_00226.PRT</span>
        </Row>
        <Row>
          <svg width="7" height="5" viewBox="0 0 7 5" className="ml-[6px]"><path d="M0 0h7L3.500 5z" fill="#333" /></svg>
          <div className="ml-[9px]"><S w={14} h={14}><path d="M.5.500h13v13H.5z" fill="#f2f5f6" stroke="#b5bcbf" /><path d="M3 3.500h2M3 7h2M3 10.500h2M7 3.500h4M7 7h4M7 10.500h4" stroke="#3f7f98" /></S></div>
          <span className="ml-[4px] underline underline-offset-2">Design Items</span>
        </Row>
        <Row>
          <svg width="4" height="7" viewBox="0 0 4 7" className="ml-[26px]"><path d="M0 0l4 3.500L0 7z" fill="#333" /></svg>
          <div className="ml-[10px]"><S w={15} h={15}><circle cx="6" cy="5" r="4" fill="#d8cdf0" stroke="#6b4fb0" /><circle cx="10" cy="8" r="4" fill="#d8cdf0" stroke="#6b4fb0" /><circle cx="5" cy="10" r="3.400" fill="#e9e2f7" stroke="#6b4fb0" /></S></div>
          <span className="ml-[4px]">Quilts (1)</span>
        </Row>
        <Row>
          <svg width="4" height="7" viewBox="0 0 4 7" className="ml-[26px]"><path d="M0 0l4 3.500L0 7z" fill="#333" /></svg>
          <div className="ml-[10px]"><S w={15} h={15}><path d="M5 1h9v9H5z" fill="#fff" stroke={T} /><path d="M1 4h9v10H1z" fill="#f0f8fa" stroke="#3d8ea8" strokeWidth="1.200" /></S></div>
          <span className="ml-[3px] px-px border border-dotted border-[#8a9296] leading-[15px]">Bodies (2)</span>
        </Row>
        {rows.map(([n, ic, a, b, ar, end]) => (
          <Row key={n}>
            <Gut arrow={ar} end={end} />
            <div className="-ml-[20px] mr-[4px] w-[16px] flex justify-center">{ic}</div>
            <span className="w-[114px] whitespace-nowrap">{n}</span>
            <span className="w-[21px] pl-[2px]">{a}</span>
            <span className="w-[8px] overflow-hidden whitespace-nowrap text-clip">{b}</span>
          </Row>
        ))}
        <div className="ml-[2px] mr-[6px] mt-[6px] h-[2px] bg-[#84d173]" />
      </div>
      <div className="mt-auto mb-[7px] flex h-[15px] shrink-0 items-stretch gap-[2px] mr-[6px]">
        <div className="flex w-[153px] items-center justify-between bg-[#f0f3f4] px-[3px] border border-[#e7eaeb]">
          <Arrow /><Arrow r />
        </div>
        <div className="flex flex-1 items-center justify-between bg-[#f0f3f4] px-[3px] border border-[#e7eaeb]">
          <Arrow dark />
          <div className="h-full w-[10px] bg-[#dfe3e4]" />
          <Arrow r dark />
        </div>
      </div>
    </div>
  </div>
);

const StatusBar = () => (
  <div className="flex h-[33px] shrink-0 items-center bg-[#f7fafa] border-t border-[#cfd3d5] text-[11.5px] font-['Lato',sans-serif] text-[#5c686e]">
    <div className="flex h-[26px] w-[16px] items-center justify-center bg-[#d8dcde] border-r border-[#c2c7c9]">
      <svg width="14" height="15" viewBox="0 0 14 15" fill="none"><path d="M0 1h14v13H0zM0 4h14M5 4v10" stroke="#6c767b" /><ellipse cx="9" cy="11" rx="4" ry="2.200" stroke="#444" /></svg>
    </div>
    <svg width="16" height="17" viewBox="0 0 16 17" className="ml-[8px]" fill="none"><circle cx="8" cy="8.500" r="6" fill="#3f9fd0" /><path d="M2 14C0 10 9 2 14 1c2 2-1 6-4 9s-6 6-8 4z" stroke="#6e7e86" strokeWidth="1.100" /><path d="M4 8h8" stroke="#d7eef8" strokeWidth="1.600" /></svg>
    <div className="ml-[8px] h-[15px] w-[15px] rounded-sm bg-[#e7eaeb] border border-[#8d989d]" />
    <div className="ml-[12px] h-[24px] border-l border-[#c9ced0]" />
    <div className="ml-[778px] flex h-[23px] w-[23px] items-center justify-center border border-[#d9dcdd] bg-[#eef0f0]">
      <svg width="16" height="16" viewBox="0 0 16 16" fill="none"><circle cx="8" cy="8" r="7" fill="#e55d62" stroke="#c93f46" /><circle cx="8" cy="8" r="4.300" fill="#f7c7c9" /><path d="M5.500 5.500l5 5M10.500 5.500l-5 5" stroke="#d0272f" strokeWidth="1.800" /></svg>
    </div>
    <div className="ml-[36px] h-[24px] w-[5px] border-x border-[#c9ced0]" />
    <svg width="15" height="15" viewBox="0 0 15 15" className="ml-[7px]"><path d="M1 6l2-5h2l1 5v8H1zM9 6l1-5h2l2 5v8H9zM6 4h3v5H6z" fill="#3f4549" /></svg>
    <Caret c="#666" cls="ml-[7px]" />
    <div className="ml-[6px] h-[24px] border-l border-[#c9ced0]" />
    <svg width="17" height="17" viewBox="0 0 17 17" fill="none" className="ml-[4px]"><path d="M8 1c-1 4 0 5 1 6s-5 2-6 5-1 3-1 4" stroke="#3f9f8f" /><path d="M8 8l7 4-5 1-1 3z" stroke="#6c767b" fill="#f7fafa" /></svg>
    <Caret c="#666" cls="ml-[7px]" />
    <svg width="16" height="16" viewBox="0 0 16 16" fill="none" className="ml-[7px]"><path d="M1 1h14v14H1z" stroke="#a9b0b3" strokeDasharray="2 1.500" /><path d="M3 4h6v3H3z" fill="#b3b9bc" /><path d="M7 6l5 6-3 0-1 2z" fill="#eef0f1" stroke="#8a9296" /></svg>
    <div className="ml-[88px] flex h-[24px] w-[157px] items-stretch border border-[#c2c7c9] bg-[#f7fafa]">
      <span className="flex-1 pl-[7px] leading-[22px] text-[#5c686e]">Geometry</span>
      <div className="flex w-[15px] items-center justify-center border-l border-[#c2c7c9]"><Caret c="#555" /></div>
    </div>
  </div>
);

export default function App() {
  return (
    <div className="flex h-[720px] w-[1280px] flex-col overflow-hidden bg-[#cac8c4] font-['Roboto',sans-serif] blur-[0.35px]">
      <div className="h-[3px] shrink-0 bg-[#d5d7d8]" />
      <TabBar />
      <Ribbon />
      <div className="flex h-[542px] shrink-0">
        <Panel />
        <div className="relative flex-1 bg-[#e9edef]">
          <Model />
          <ViewBar />
        </div>
      </div>
      <StatusBar />
    </div>
  );
}
